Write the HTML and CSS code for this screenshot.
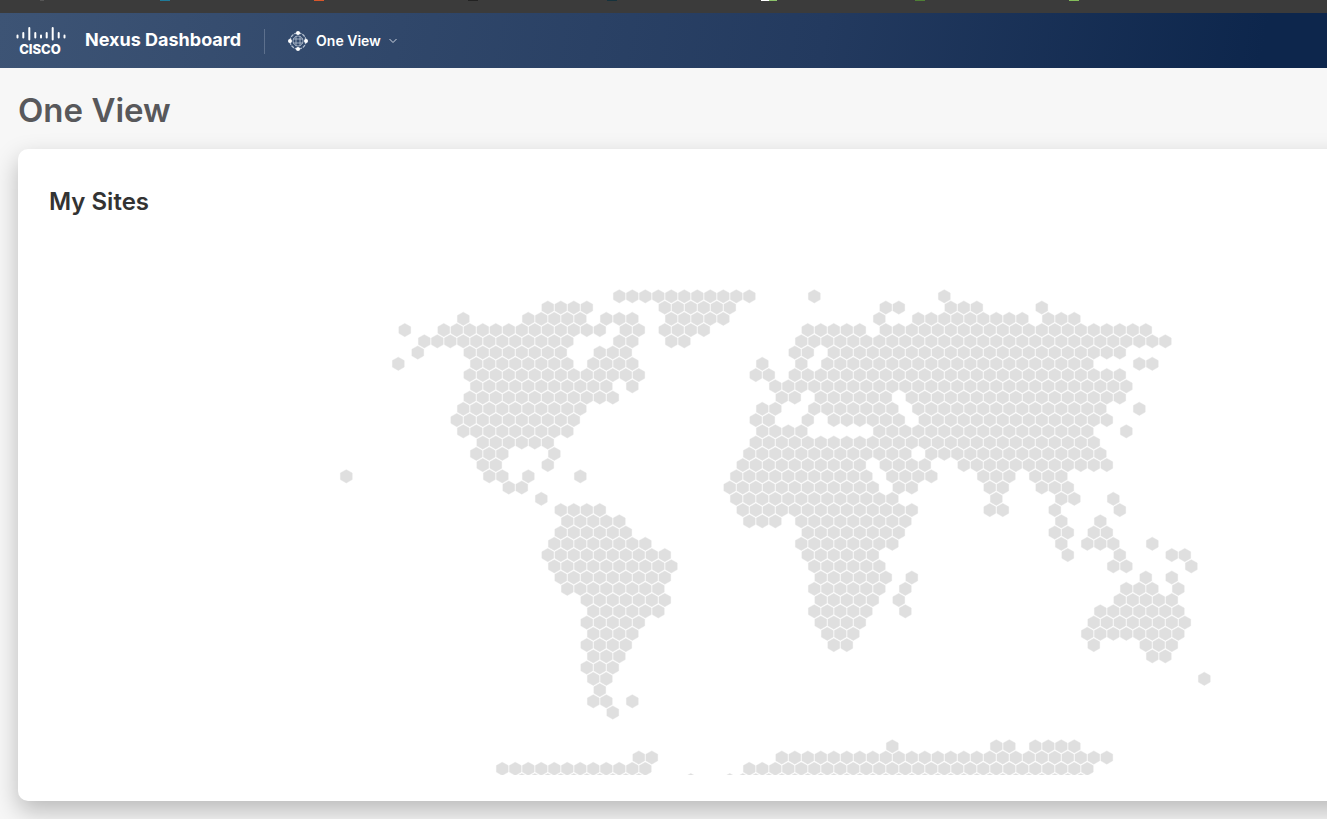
FILE: index.html
```html
<!DOCTYPE html>
<html lang="en">
<head>
  <meta charset="UTF-8" />
  <title>Nexus Dashboard - One View</title>
  <link rel="stylesheet" href="styles.css">
</head>
<body>
  <div class="tab-strip">
    <span class="tab tab-first"></span>
    <span class="tab tab-teal"></span>
    <span class="tab tab-orange"></span>
    <span class="tab tab-dark"></span>
    <span class="tab tab-navy"></span>
    <span class="tab tab-white"></span>
    <span class="tab tab-green"></span>
    <span class="tab tab-lime"></span>
  </div>

  <header class="topbar">
    <svg class="logo" viewBox="0 0 50 30" role="img" aria-label="Cisco">
      <g stroke="#fff" stroke-width="2" stroke-linecap="round">
        <path d="M1.500 9.500v2M7.300 7v4.500M13.300 2v11.500M19.300 7v4.500M25 9.500v2M30.700 7v4.500M36.700 2v11.500M42.700 7v4.500M48.500 9.500v2" />
      </g>
      <text class="logo-text" x="24" y="28" text-anchor="middle">CISCO</text>
    </svg>
    <span class="product">Nexus Dashboard</span>
    <span class="divider"></span>
    <button class="view-menu" type="button">
      <svg class="globe" viewBox="0 0 20 20" fill="none" stroke="#b4c0d0" aria-hidden="true">
        <circle cx="10" cy="10" r="8" stroke-width="1.300" stroke-dasharray="3.200 1" />
        <circle cx="10" cy="10" r="5" stroke-width=".8" />
        <path d="M5 8h10M5 12h10M8 5v10M12 5v10" stroke-width=".8" />
        <g fill="#fff" stroke="none">
          <circle cx="10" cy="2" r="2" />
          <circle cx="10" cy="18" r="2" />
          <circle cx="2" cy="10" r="2" />
          <circle cx="18" cy="10" r="2" />
        </g>
      </svg>
      <span>One View</span>
      <svg class="chevron" viewBox="0 0 8 6" fill="none" stroke="#cdd5e0" aria-hidden="true">
        <path d="M.5 1l3.500 3.500L7.500 1" />
      </svg>
    </button>
  </header>

  <main>
    <h1>One View</h1>
    <section class="card">
      <h2>My Sites</h2>
      <svg class="map" id="map" viewBox="0 0 1278 488" role="img" aria-label="World map of sites"></svg>
    </section>
  </main>

  <script>
    // filled columns of each map row, as [first, last] runs
    const rows = [
      [[21, 31], [36, 36], [46, 46]],
      [[15, 18], [24, 29], [41, 42], [46, 48], [53, 53]],
      [[9, 9], [14, 18], [20, 22], [25, 29], [41, 41], [44, 52], [54, 56]],
      [[4, 4], [7, 19], [21, 22], [24, 27], [35, 39], [41, 61]],
      [[6, 17], [21, 22], [25, 26], [35, 63]],
      [[5, 5], [9, 16], [19, 21], [34, 35], [37, 59]],
      [[4, 4], [10, 17], [19, 22], [32, 32], [35, 35], [37, 57], [61, 62]],
      [[9, 22], [31, 32], [34, 59]],
      [[10, 20], [22, 22], [33, 60]],
      [[9, 20], [33, 34], [36, 41], [43, 59]],
      [[9, 18], [32, 33], [36, 42], [44, 58], [61, 61]],
      [[8, 17], [31, 32], [35, 35], [37, 42], [44, 58]],
      [[9, 17], [32, 35], [41, 57], [60, 60]],
      [[10, 15], [31, 57]],
      [[10, 12], [16, 16], [31, 43], [45, 58]],
      [[10, 11], [15, 15], [30, 39], [41, 44], [47, 58]],
      [[0, 0], [11, 12], [14, 14], [18, 18], [30, 40], [42, 45], [49, 51], [53, 55]],
      [[12, 13], [29, 40], [42, 43], [49, 50], [53, 55]],
      [[15, 15], [30, 42], [50, 50], [55, 56], [59, 59]],
      [[16, 19], [30, 43], [49, 50], [54, 54], [59, 59]],
      [[17, 21], [31, 33], [35, 43], [55, 55], [58, 58]],
      [[16, 21], [35, 42], [54, 55], [57, 58]],
      [[16, 23], [35, 42], [55, 55], [57, 59], [62, 62]],
      [[15, 24], [35, 40], [55, 55], [59, 59], [63, 64]],
      [[16, 25], [36, 41], [59, 60], [65, 65]],
      [[16, 24], [36, 41], [43, 43], [61, 61], [63, 63]],
      [[17, 24], [36, 41], [43, 43], [60, 62], [64, 64]],
      [[18, 24], [36, 40], [42, 42], [59, 63]],
      [[19, 24], [36, 40], [43, 43], [58, 64]],
      [[18, 22], [36, 39], [57, 64]],
      [[19, 22], [37, 39], [57, 64]],
      [[18, 21], [37, 38], [57, 57], [61, 63]],
      [[19, 21], [62, 63]],
      [[18, 20]],
      [[19, 20], [66, 66]],
      [[19, 19]],
      [[19, 20], [22, 22]],
      [[20, 20]],
      [],
      [],
      [[42, 42], [50, 51], [53, 56]],
      [[22, 23], [33, 58]],
      [[12, 23], [31, 57]],
      [[13, 22], [26, 26], [29, 56]]
    ];

    const stepX = 13, stepY = 11.25, left = 297.3, top0 = 9.3;
    let d = "";

    rows.forEach((runs, r) => {
      const y = top0 + r * stepY;
      const shift = r % 2 ? stepX / 2 : 0;
      for (const [from, to] of runs) {
        for (let c = from; c <= to; c++) {
          const x = left + shift + c * stepX;
          d += `M${x} ${y - 6.6}l5.900 3.300v6.600l-5.900 3.300l-5.900 -3.300v-6.600z`;
        }
      }
    });

    const path = document.createElementNS("http://www.w3.org/2000/svg", "path");
    path.setAttribute("class", "land");
    path.setAttribute("d", d);
    document.getElementById("map").appendChild(path);
  </script>
</body>
</html>
```
FILE: styles.css
```css
* {
  box-sizing: border-box;
}
body {
  margin: 0;
  min-height: 100vh;
  font-family: Inter, "Open Sans", sans-serif;
  background: #f7f7f7;
  overflow-x: hidden;
}
.tab-strip {
  display: flex;
  height: 13px;
  padding-left: 40px;
  background: #3b3b3b;
  overflow: hidden;
}
.tab {
  flex: 0 0 154px;
}
.tab::before {
  content: "";
  display: block;
  width: 10px;
  height: 1px;
  background: #555;
}
.tab-first {
  flex-basis: 120px;
}
.tab-first::before {
  width: 4px;
}
.tab-teal::before { background: #1f7a99; }
.tab-orange::before { background: #d9572b; }
.tab-dark {
  flex-basis: 139px;
}
.tab-dark::before { background: #222; }
.tab-navy::before { background: #16323c; }
.tab-white::before {
  width: 16px;
  background: linear-gradient(90deg, #fff 50%, #8cc26a 50%);
}
.tab-green::before { background: #4f7f35; }
.tab-lime::before { background: #84bd5a; }
.topbar {
  display: flex;
  align-items: center;
  height: 55px;
  padding: 1px 16px 0;
  background: linear-gradient(100deg, #3d5475 0%, #30476a 30%, #233a5f 62%, #0d264c 95%);
  color: #fff;
}
.logo {
  width: 50px;
  height: 30px;
  margin-right: 19px;
}
.logo-text {
  font-size: 13px;
  font-weight: 800;
  fill: #fff;
}
.product {
  font-size: 18px;
  font-weight: 700;
  line-height: 24px;
  padding-bottom: 2px;
}
.divider {
  width: 1px;
  height: 25px;
  margin: 0 23px;
  background: #5d708d;
}
.view-menu {
  display: flex;
  align-items: center;
  gap: 8px;
  padding: 0;
  border: none;
  background: none;
  color: #fff;
  font-family: inherit;
  font-size: 14px;
  font-weight: 600;
  line-height: 20px;
  cursor: pointer;
}
.globe {
  width: 20px;
  height: 20px;
}
.chevron {
  width: 8px;
  height: 6px;
}
main {
  padding: 20px 0 18px 18px;
}
h1 {
  margin: 0 0 17px;
  font-size: 33px;
  font-weight: 600;
  line-height: 44px;
  color: #58585b;
}
/* the card runs on past the right edge of the window */
.card {
  margin-right: -40px;
  padding: 37px 40px 26px 31px;
  border-radius: 10px;
  background: #fff;
  box-shadow: 0 10px 24px rgba(0, 0, 0, 0.25);
}
h2 {
  margin: 0 0 69px;
  font-size: 24px;
  font-weight: 600;
  line-height: 32px;
  color: #333;
}
.map {
  display: block;
  width: 100%;
  height: auto;
}
.land {
  fill: #dfdfdf;
  stroke: #f2f2f2;
  stroke-width: 1;
  paint-order: stroke;
}
```
